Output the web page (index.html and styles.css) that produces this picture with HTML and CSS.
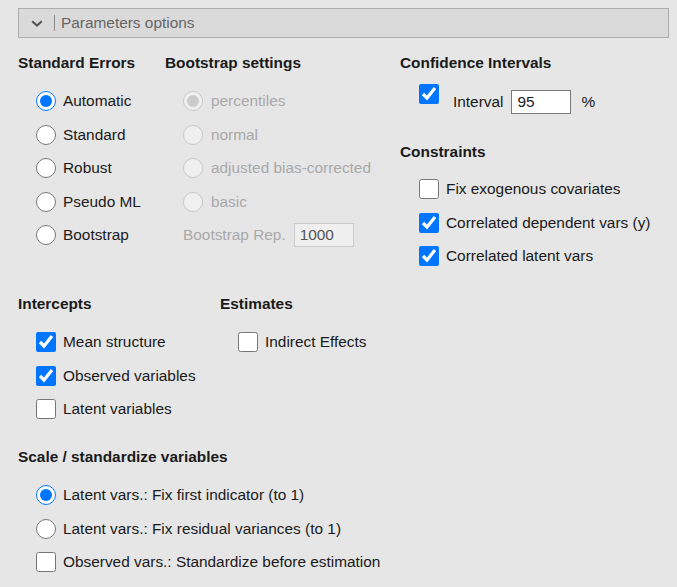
FILE: index.html
```html
<!DOCTYPE html>
<html lang="en">
<head>
<meta charset="utf-8">
<title>Parameters options</title>
<link rel="stylesheet" href="styles.css">
</head>
<body>
<div class="panel-header">
  <svg class="chev" width="12" height="7" viewBox="0 0 12 7"><path d="M1.2 1.2 L6 5.6 L10.8 1.2" fill="none" stroke="#555" stroke-width="2"/></svg>
  <span class="sep"></span>
  <span class="title">Parameters options</span>
</div>
<div class="content">
  <div class="section">
    <div class="col col-se">
      <div class="heading">Standard Errors</div>
      <div class="list">
        <label class="opt"><input type="radio" name="se" checked>Automatic</label>
        <label class="opt"><input type="radio" name="se">Standard</label>
        <label class="opt"><input type="radio" name="se">Robust</label>
        <label class="opt"><input type="radio" name="se">Pseudo ML</label>
        <label class="opt"><input type="radio" name="se">Bootstrap</label>
      </div>
    </div>
    <div class="col col-bs">
      <div class="heading">Bootstrap settings</div>
      <div class="list disabled">
        <label class="opt"><input type="radio" name="bs" checked disabled>percentiles</label>
        <label class="opt"><input type="radio" name="bs" disabled>normal</label>
        <label class="opt"><input type="radio" name="bs" disabled>adjusted bias-corrected</label>
        <label class="opt"><input type="radio" name="bs" disabled>basic</label>
        <div class="opt rep"><span>Bootstrap Rep.</span><input class="num" type="text" value="1000" disabled></div>
      </div>
    </div>
    <div class="col col-ci">
      <div class="heading">Confidence Intervals</div>
      <div class="ci-row">
        <input type="checkbox" checked>
        <div class="ci-inline">
          <span>Interval</span>
          <input class="num" type="text" value="95">
          <span class="pct">%</span>
        </div>
      </div>
      <div class="heading constraints">Constraints</div>
      <div class="list">
        <label class="opt"><input type="checkbox">Fix exogenous covariates</label>
        <label class="opt"><input type="checkbox" checked>Correlated dependent vars (y)</label>
        <label class="opt"><input type="checkbox" checked>Correlated latent vars</label>
      </div>
    </div>
  </div>
  <div class="section second">
    <div class="col col-int">
      <div class="heading">Intercepts</div>
      <div class="list">
        <label class="opt"><input type="checkbox" checked>Mean structure</label>
        <label class="opt"><input type="checkbox" checked>Observed variables</label>
        <label class="opt"><input type="checkbox">Latent variables</label>
      </div>
    </div>
    <div class="col col-est">
      <div class="heading">Estimates</div>
      <div class="list">
        <label class="opt"><input type="checkbox">Indirect Effects</label>
      </div>
    </div>
  </div>
  <div class="section third">
    <div class="col">
      <div class="heading">Scale / standardize variables</div>
      <div class="list">
        <label class="opt"><input type="radio" name="sc" checked>Latent vars.: Fix first indicator (to 1)</label>
        <label class="opt"><input type="radio" name="sc">Latent vars.: Fix residual variances (to 1)</label>
        <label class="opt"><input type="checkbox">Observed vars.: Standardize before estimation</label>
      </div>
    </div>
  </div>
</div>
</body>
</html>
```
FILE: styles.css
```css
html, body {
  margin: 0;
  padding: 0;
}
body {
  background: #e6e6e6;
  font-family: "Liberation Sans", Arial, sans-serif;
  font-size: 15.4px;
  color: #1a1a1a;
  width: 677px;
  height: 587px;
  overflow: hidden;
}
.panel-header {
  box-sizing: border-box;
  margin: 8px 8px 0 18px;
  height: 29.5px;
  background: #dadada;
  border: 1px solid #acacac;
  display: flex;
  align-items: center;
  padding-left: 12px;
}
.chev {
  display: block;
  margin-top: 1px;
}
.sep {
  width: 1px;
  height: 16px;
  background: #8c8c8c;
  margin-left: 11px;
}
.title {
  margin-left: 6px;
  color: #666;
}
.content {
  padding-left: 18px;
  margin-top: 16px;
}
.section {
  display: flex;
  align-items: flex-start;
}
.second {
  margin-top: 21.5px;
}
.third {
  margin-top: 21.5px;
}
.col-se { width: 147px; }
.col-bs { width: 235px; }
.col-int { width: 202px; }
.heading {
  font-weight: bold;
  line-height: 18px;
  height: 18px;
  white-space: nowrap;
}
.list {
  margin-top: 13px;
  padding-left: 18px;
}
.opt {
  display: flex;
  align-items: center;
  height: 33.5px;
  gap: 7px;
  white-space: nowrap;
}
.opt input[type="radio"],
.opt input[type="checkbox"],
.ci-row input[type="checkbox"] {
  width: 20px;
  height: 20px;
  margin: 0;
  flex: none;
}
.disabled .opt {
  color: #a9a9a9;
  gap: 8px;
}
.rep {
  gap: 12px;
}
.num {
  box-sizing: border-box;
  width: 60px;
  height: 24px;
  margin: 0;
  padding: 0 5px;
  font-family: "Liberation Sans", Arial, sans-serif;
  font-size: 15.4px;
  color: #1a1a1a;
  background: #fff;
  border: 1px solid #7a7a7a;
  border-radius: 0;
}
.num:disabled {
  background: #efefef;
  border-color: #cacaca;
  color: #555;
}
.ci-row {
  display: flex;
  align-items: flex-start;
  margin-top: 12px;
  padding-left: 19px;
  height: 30px;
}
.ci-inline {
  display: flex;
  align-items: center;
  margin-top: 6px;
  margin-left: 14px;
  gap: 8px;
}
.pct {
  margin-left: 2px;
}
.constraints {
  margin-top: 29px;
}
.col-ci .list {
  padding-left: 19px;
  margin-top: 12px;
}
```
